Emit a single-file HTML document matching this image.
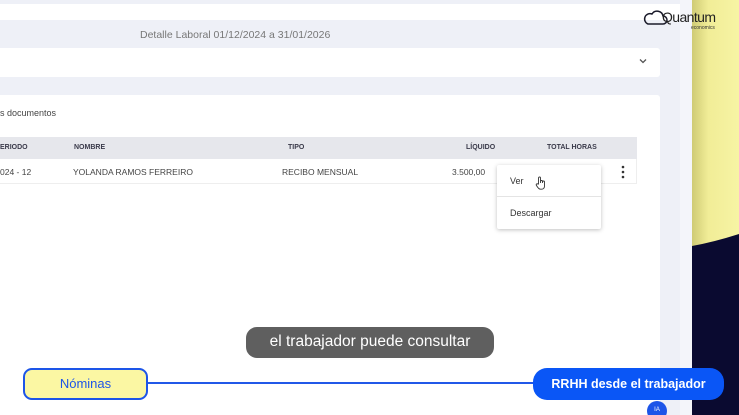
<!DOCTYPE html>
<html><head><style>
html,body{margin:0;width:739px;height:415px;overflow:hidden;}
body{position:relative;background:#eceef6;font-family:"Liberation Sans",sans-serif;}
div{position:absolute;box-sizing:border-box;}
.t{font-size:8.5px;color:#444;white-space:nowrap;}
.h{font-size:7px;font-weight:bold;color:#3a3a4a;white-space:nowrap;}
</style></head><body>
<div style="left:0;top:0;width:692px;height:415px;background:#eef0f7"></div>
<div style="left:0;top:4px;width:680px;height:16px;background:#fff"></div>
<div style="left:680px;top:0;width:12px;height:415px;background:#f4f5fa"></div>
<div class="t" style="left:140px;top:29px;font-size:10.5px;color:#777">Detalle Laboral 01/12/2024 a 31/01/2026</div>
<div style="left:0;top:48px;width:660px;height:29px;background:#fff;border-radius:0 3px 3px 0"></div>
<svg style="position:absolute;left:639px;top:58px" width="8" height="6"><path d="M1 1.5L4 4.5L7 1.5" stroke="#555" stroke-width="1.3" fill="none"/></svg>
<div style="left:0;top:95px;width:660px;height:320px;background:#fff;border-radius:0 3px 0 0"></div>
<div class="t" style="left:0;top:108px;font-size:9px">s documentos</div>
<div style="left:0;top:137px;width:637px;height:22px;background:#e6e7ec"></div>
<div style="left:0;top:159px;width:637px;height:25px;background:#fff;border:1px solid #eee;border-top:none;border-left:none"></div>
<div class="h" style="left:0;top:144px">ERIODO</div>
<div class="h" style="left:74px;top:144px">NOMBRE</div>
<div class="h" style="left:288px;top:144px">TIPO</div>
<div class="h" style="left:466px;top:144px">LÍQUIDO</div>
<div class="h" style="left:547px;top:144px">TOTAL HORAS</div>
<div class="t" style="left:0;top:167px">024 - 12</div>
<div class="t" style="left:73px;top:167px">YOLANDA RAMOS FERREIRO</div>
<div class="t" style="left:282px;top:167px">RECIBO MENSUAL</div>
<div class="t" style="left:452px;top:167px">3.500,00</div>
<svg style="position:absolute;left:621px;top:165px" width="4" height="14"><circle cx="2" cy="2" r="1.3" fill="#333"/><circle cx="2" cy="7" r="1.3" fill="#333"/><circle cx="2" cy="12" r="1.3" fill="#333"/></svg>
<div style="left:497px;top:165px;width:104px;height:64px;background:#fff;box-shadow:0 1px 4px rgba(0,0,0,.25);border-radius:2px"></div>
<div style="left:497px;top:196px;width:104px;height:1px;background:#e4e4e4"></div>
<div class="t" style="left:510px;top:176px;font-size:9px;color:#333">Ver</div>
<svg style="position:absolute;left:535px;top:176px" width="11" height="14"><path d="M3.5 8V2a1 1 0 0 1 2 0v5V5.5a1 1 0 0 1 2 0V7V6a1 1 0 0 1 2 0v4c0 2-1 3.2-3 3.2H5.5C4 13.2 3 12 1.8 10L1.2 9a1 1 0 0 1 1.6-1z" fill="#fff" stroke="#333" stroke-width="0.9"/></svg>
<div class="t" style="left:510px;top:208px;font-size:9px;color:#333">Descargar</div>
<svg style="position:absolute;left:692px;top:0" width="47" height="415">
<defs><linearGradient id="g" x1="0" x2="1" y1="0" y2="0"><stop offset="0" stop-color="#cfcb75"/><stop offset="0.35" stop-color="#f1ed97"/><stop offset="1" stop-color="#f7f4a4"/></linearGradient></defs>
<rect width="47" height="415" fill="#0a0a30"/>
<path d="M0 0H47V234Q22 242 0 246Z" fill="url(#g)"/>
</svg>
<svg style="position:absolute;left:643px;top:8px" width="26" height="18"><path d="M5 16H20a4 4 0 0 0 0-8a6 6 0 0 0-11-2a5 5 0 0 0-4 10z" fill="none" stroke="#1a1a2a" stroke-width="1.5"/></svg>
<div style="left:662px;top:9px;font-size:14px;color:#222;letter-spacing:-0.6px">Quantum</div>
<div style="left:691px;top:25px;font-size:5px;color:#333">economics</div>
<div style="left:246px;top:327px;width:248px;height:31px;background:#5f5f5f;border-radius:11px;color:#fff;font-size:15.5px;text-align:center;line-height:30px">el trabajador puede consultar</div>
<div style="left:140px;top:382px;width:420px;height:2px;background:#2158e8"></div>
<div style="left:23px;top:368px;width:125px;height:32px;background:#fbf7a3;border:2px solid #1d55e8;border-radius:9px;color:#1d55e8;font-size:13px;text-align:center;line-height:28px">Nóminas</div>
<div style="left:533px;top:368px;width:191px;height:32px;background:#0a56f6;border-radius:14px;color:#fff;font-size:12.5px;font-weight:bold;text-align:center;line-height:32px">RRHH desde el trabajador</div>
<div style="left:647px;top:401px;width:20px;height:20px;border-radius:50%;background:#1d55e8;color:#fff;font-size:6px;text-align:center;line-height:18px">IA</div>
</body></html>
